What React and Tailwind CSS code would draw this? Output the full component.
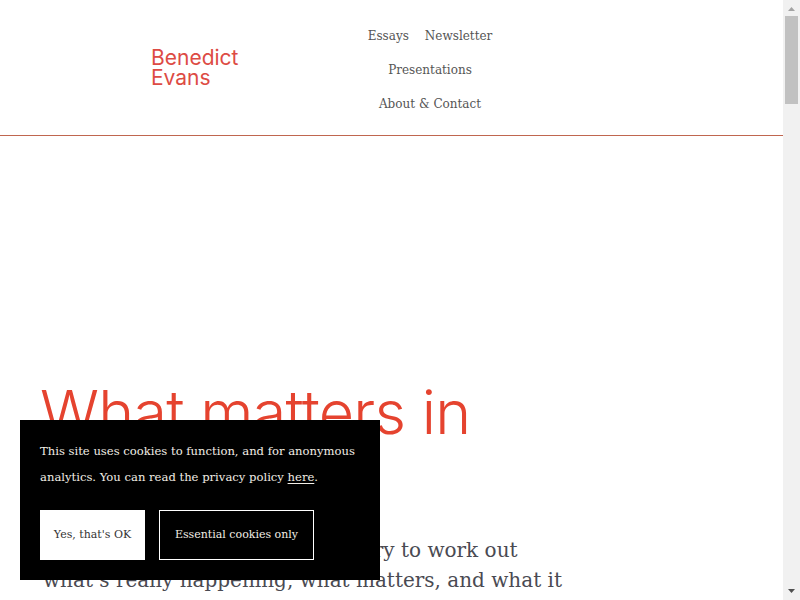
import React from "react";

const serif = { fontFamily: '"DejaVu Serif", "Liberation Serif", serif' };
const sans = { fontFamily: 'Inter, "Liberation Sans", sans-serif' };

function FakeScrollbar() {
  return (
    <div className="fixed right-0 top-0 h-screen w-[17px] bg-[#f1f1f1] flex flex-col items-center">
      <svg width="17" height="16" viewBox="0 0 17 16" className="shrink-0">
        <path d="M5 11 L8.5 7 L12 11 Z" fill="#a3a3a3" />
      </svg>
      <div className="w-[13px] h-[88px] bg-[#c1c1c1]" />
      <div className="flex-1" />
      <svg width="17" height="16" viewBox="0 0 17 16" className="shrink-0">
        <path d="M5 5 L12 5 L8.5 9 Z" fill="#505050" />
      </svg>
    </div>
  );
}

export default function App() {
  return (
    <div className="bg-white pr-[17px]" style={serif}>
      <div className="min-h-[3700px]">
        <header className="flex items-center border-b border-b-[#c0664f] pl-[151px] pt-[19px] pb-[14px]">
          <a className="w-[209px] -mt-[4px] text-[21px] leading-[20px] text-[#dd4b44] font-normal" style={sans}>
            Benedict
            <br />
            Evans
          </a>
          <nav className="w-[140px] flex flex-wrap justify-center gap-x-4 text-[12px] leading-[34px] text-[#555]">
            <a>Essays</a>
            <a>Newsletter</a>
            <a>Presentations</a>
            <a>About &amp; Contact</a>
          </nav>
        </header>

        <main className="px-[40px] pt-[242px]">
          <h1
            className="text-[61px] leading-[68px] font-light tracking-[-0.7px] text-[#e5432f]"
            style={sans}
          >
            What matters in
            <br />
            tech?
          </h1>
          <p className="mt-[21px] pl-[3px] text-[20px] leading-[30px] text-[#4a4a52]">
            <span className="pl-[7px]">I am an independent analyst, I try to work out</span>
            <br />
            what&rsquo;s really happening, what matters, and what it
            <br />
            means.
          </p>
        </main>
      </div>

      <div className="fixed left-[20px] bottom-[20px] w-[360px] bg-black px-[20px] pt-[18px] pb-[20px]">
        <p className="text-[11.6px] leading-[26px] text-[#f2eee6]">
          This site uses cookies to function, and for anonymous analytics. You can read the privacy policy{" "}
          <a className="underline underline-offset-2">here</a>.
        </p>
        <div className="mt-[20px] flex gap-[14px]">
          <button className="h-[50px] w-[105px] bg-white text-[11px] text-[#333]">Yes, that's OK</button>
          <button className="h-[50px] w-[155px] border border-white text-[11px] text-[#f2eee6]">
            Essential cookies only
          </button>
        </div>
      </div>

      <FakeScrollbar />
    </div>
  );
}
